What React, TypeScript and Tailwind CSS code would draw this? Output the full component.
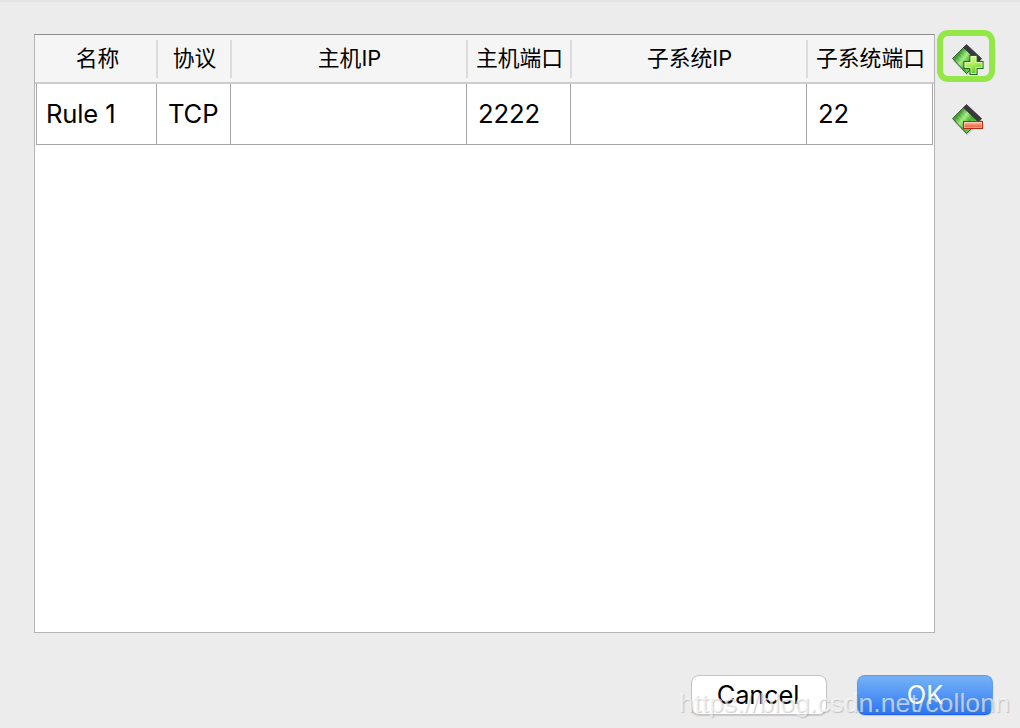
const columns = [
  { title: "名称", value: "Rule 1", width: "w-[120px]", pad: "pl-[9px]" },
  { title: "协议", value: "TCP", width: "w-[74px]", pad: "pl-[11px]" },
  { title: "主机IP", value: "", width: "w-[236px]", pad: "pl-[12px]" },
  { title: "主机端口", value: "2222", width: "w-[104px]", pad: "pl-[11px]" },
  { title: "子系统IP", value: "", width: "w-[236px]", pad: "pl-[12px]" },
  { title: "子系统端口", value: "22", width: "w-[126px]", pad: "pl-[11px]" },
];

function CardBase({ id }: { id: string }) {
  return (
    <>
      <defs>
        <linearGradient id={`${id}-card`} x1="0" y1="0.2" x2="0.9" y2="0.9">
          <stop offset="0" stopColor="#8fd873" />
          <stop offset="0.2" stopColor="#3c9a2a" />
          <stop offset="0.42" stopColor="#a4ea82" />
          <stop offset="0.62" stopColor="#3fae2a" />
          <stop offset="1" stopColor="#8ee468" />
        </linearGradient>
        <linearGradient id={`${id}-plus`} x1="0" y1="0" x2="0.3" y2="1">
          <stop offset="0" stopColor="#e3fbb0" />
          <stop offset="0.5" stopColor="#b4f060" />
          <stop offset="1" stopColor="#5fcc2a" />
        </linearGradient>
        <linearGradient id={`${id}-minus`} x1="0" y1="0" x2="0" y2="1">
          <stop offset="0" stopColor="#ffc9b4" />
          <stop offset="0.5" stopColor="#fb8460" />
          <stop offset="1" stopColor="#ee4a24" />
        </linearGradient>
      </defs>
      <path d="M5 20.5 19 35.5 34.5 20.5 32 18Z" fill="#000" opacity="0.15" />
      <path d="M4.5 18.5 16 7 30.5 21.5 18.5 33.5Z" fill={`url(#${id}-card)`} stroke="#3c6334" />
      <path d="M15.5 7.5 18.5 4.5 33.5 18.5 30.5 22Z" fill="#3a3a3e" stroke="#29292c" strokeWidth="0.7" />
      <path
        d="M7.5 19 19 30.5M10 16.5 21.5 28M12.5 14 24 25.5M15 11.5 26.5 23"
        stroke="#d8ffc0"
        strokeWidth="0.7"
        opacity="0.45"
      />
    </>
  );
}

function AddIcon() {
  return (
    <svg className="shrink-0" width="40" height="40" viewBox="0 0 40 40">
      <CardBase id="add" />
      <path
        d="M22 15.5h7v6h6v7h-6v6h-7v-6h-6v-7h6Z"
        fill="url(#add-plus)"
        stroke="#1f6b17"
        strokeWidth="1.1"
      />
      <path d="M23 16.5h5v6h6v5h-6v6h-5v-6h-6v-5h6Z" fill="none" stroke="#e9ffc4" opacity="0.7" />
    </svg>
  );
}

function RemoveIcon() {
  return (
    <svg width="40" height="40" viewBox="0 0 40 40">
      <CardBase id="remove" />
      <rect x="15.5" y="21.5" width="19" height="7" fill="url(#remove-minus)" stroke="#b52a14" />
      <rect x="16.5" y="22.5" width="17" height="5" fill="none" stroke="#ffd9cc" opacity="0.6" />
    </svg>
  );
}

export default function App() {
  return (
    <div className="relative flex h-[728px] w-[1020px] flex-col overflow-hidden border-t-2 border-[#e5e5e5] bg-[#ececec] pt-8 pl-[34px] font-['Inter','Noto_Sans_CJK_SC',sans-serif] text-black">
      <div className="flex">
        <div className="h-[599px] w-[901px] border border-[#b4b4b4] border-t-[#8e8e8e] bg-white">
          <div className="flex h-[49px] border-b-2 border-[#cdcdcd] bg-[#f5f5f5] pl-px">
            {columns.map((col, i) => (
              <div key={col.title} className={`${col.width} flex h-full shrink-0 items-center`}>
                <div className="h-full flex-1 pt-[7px] pl-[3px] text-center text-[21.8px] leading-[32px] whitespace-nowrap">
                  {col.title}
                </div>
                {i < columns.length - 1 && <div className="-mr-0.5 h-[38px] w-0.5 bg-[#dcdcdc]" />}
              </div>
            ))}
          </div>
          <div className="ml-px flex h-[61px] w-[897px] border-b border-l border-[#a6a6a6]">
            {columns.map((col) => (
              <div
                key={col.title}
                className={`${col.width} ${col.pad} shrink-0 border-r border-[#a6a6a6] text-[25.6px] leading-[60px] tracking-[-0.15px]`}
              >
                {col.value}
              </div>
            ))}
          </div>
        </div>
        <div className="-mt-1 ml-0.5 flex flex-col items-center">
          <button className="flex h-[52px] w-[58px] justify-center rounded-[11px] border-[6px] border-[#93e746] pt-1 pl-1">
            <AddIcon />
          </button>
          <button className="mt-[18px] pl-1">
            <RemoveIcon />
          </button>
        </div>
      </div>
      <div className="mt-[42px] flex gap-[30px] pl-[657px]">
        <button className="h-10 w-[136px] rounded-[8px] border border-[#c4c4c4] bg-white pr-0.5 text-[25.5px] leading-[38px] tracking-[-0.2px] shadow-[0_1px_1px_rgba(0,0,0,0.15)]">
          Cancel
        </button>
        <button className="h-10 w-[136px] rounded-[8px] border border-[#5b9cf0] border-b-[#1c62ee] bg-linear-to-b from-[#77b2f5] to-[#2a75f3] text-[25.5px] leading-[38px] text-white shadow-[0_1px_1px_rgba(0,0,0,0.15)]">
          OK
        </button>
      </div>
      <div className="absolute top-[685px] left-[679px] font-['Liberation_Sans',sans-serif] text-[26.7px] leading-[32px] whitespace-nowrap text-white/60 [text-shadow:1px_1px_1px_rgba(120,120,120,0.35)]">
        https://blog.csdn.net/collonn
      </div>
    </div>
  );
}
